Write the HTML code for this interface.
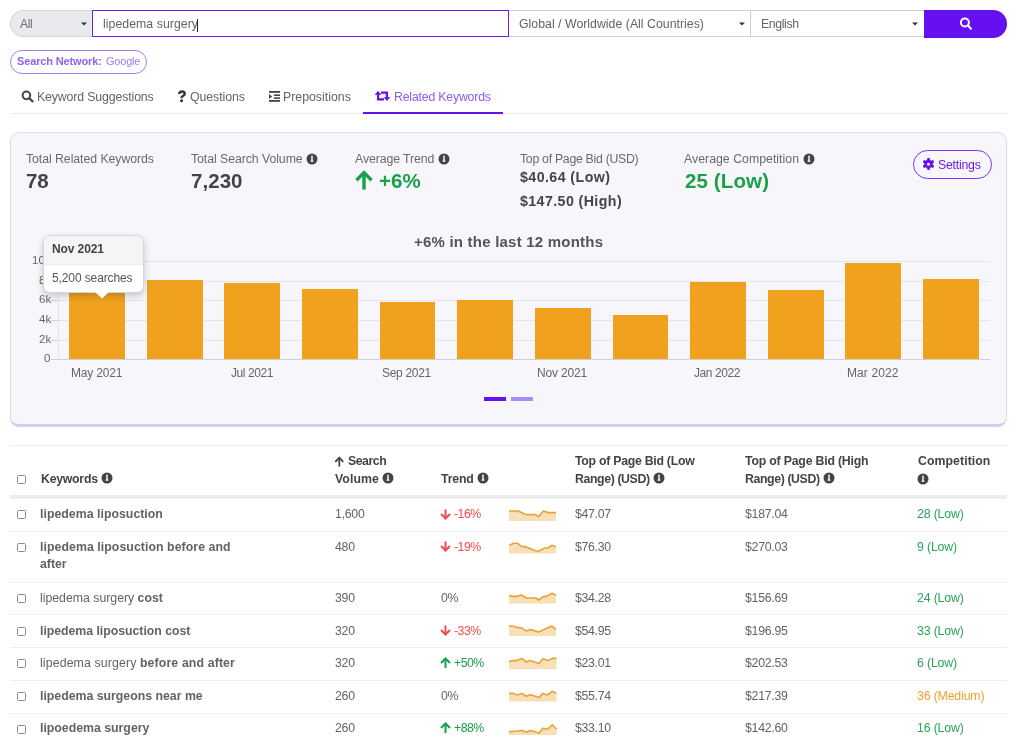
<!DOCTYPE html>
<html><head><meta charset="utf-8"><style>
html,body{margin:0;padding:0;background:#fff;width:1024px;height:743px;overflow:hidden;position:relative;font-family:"Liberation Sans", sans-serif;}
.t{position:absolute;white-space:nowrap;line-height:1;will-change:transform;}
.r{position:absolute;}
b{font-weight:700;}
</style></head><body>
<div class="r" style="left:10px;top:10px;width:82px;height:27px;background:#e9eaee;border:1px solid #d4d4d8;border-right:none;border-radius:14px 0 0 14px;box-sizing:border-box;"></div>
<div class="t" style="left:20.00px;top:17.54px;font-size:12px;font-weight:400;color:#707070;letter-spacing:-0.318px;">All</div>
<svg class="r" style="left:80.5px;top:22px;" width="6" height="4" viewBox="0 0 6 4"><path d="M0 0.5 L6 0.5 L3 3.5 Z" fill="#333"/></svg>
<div class="r" style="left:92px;top:10px;width:417px;height:27px;background:#fff;border:1.6px solid #6e1ff0;box-sizing:border-box;"></div>
<div class="t" style="left:102.80px;top:17.99px;font-size:12.3px;font-weight:400;color:#636363;letter-spacing:0.044px;">lipedema surgery</div>
<div class="r" style="left:197px;top:19px;width:1px;height:13px;background:#222;"></div>
<div class="r" style="left:509px;top:10px;width:415px;height:27px;background:#fff;border-top:1px solid #d0d0d0;border-bottom:1px solid #d0d0d0;box-sizing:border-box;"></div>
<div class="r" style="left:750px;top:10px;width:1px;height:27px;background:#d0d0d0;"></div>
<div class="t" style="left:518.50px;top:17.99px;font-size:12.3px;font-weight:400;color:#636363;letter-spacing:0.020px;">Global / Worldwide (All Countries)</div>
<svg class="r" style="left:738.5px;top:22px;" width="6" height="4" viewBox="0 0 6 4"><path d="M0 0.5 L6 0.5 L3 3.5 Z" fill="#333"/></svg>
<div class="t" style="left:761.00px;top:17.99px;font-size:12.3px;font-weight:400;color:#636363;letter-spacing:-0.390px;">English</div>
<svg class="r" style="left:911.5px;top:22px;" width="6" height="4" viewBox="0 0 6 4"><path d="M0 0.5 L6 0.5 L3 3.5 Z" fill="#333"/></svg>
<div class="r" style="left:924px;top:10px;width:83px;height:28px;background:#6610f2;border-radius:0 14px 14px 0;"></div>
<svg class="r" style="left:955px;top:13px;" width="20" height="20" viewBox="0 0 20 20"><circle cx="9.9" cy="9.45" r="4" fill="none" stroke="#fff" stroke-width="2"/><path d="M12.9 12.5 L16 15.8" stroke="#fff" stroke-width="2" stroke-linecap="round"/></svg>
<div class="r" style="left:10px;top:50px;width:137px;height:24px;border:1px solid #a47cf2;border-radius:12px;box-sizing:border-box;"></div>
<div class="t" style="left:17.40px;top:56.19px;font-size:11px;font-weight:700;color:#9262f0;letter-spacing:-0.143px;">Search Network:</div>
<div class="t" style="left:105.80px;top:56.19px;font-size:11px;font-weight:400;color:#9d7cf2;letter-spacing:-0.200px;">Google</div>
<svg class="r" style="left:20px;top:89px;" width="16" height="16" viewBox="0 0 16 16"><circle cx="6.4" cy="6.35" r="3.8" fill="none" stroke="#444" stroke-width="2"/><path d="M9.2 9.2 L12.6 12.4" stroke="#444" stroke-width="2.2" stroke-linecap="round"/></svg>
<div class="t" style="left:37.00px;top:90.59px;font-size:12.3px;font-weight:400;color:#636363;letter-spacing:-0.123px;">Keyword Suggestions</div>
<svg class="r" style="left:176px;top:89px;" width="12" height="14" viewBox="0 0 12 14"><path d="M3.2 5 C3.2 3.2 4.4 2.6 6 2.6 C7.6 2.6 8.7 3.4 8.7 4.9 C8.7 6.6 5.6 6.8 5.6 8.6 L5.6 9.2" fill="none" stroke="#383838" stroke-width="2.5"/><circle cx="5.6" cy="11.7" r="1.55" fill="#383838"/></svg>
<div class="t" style="left:190.00px;top:90.59px;font-size:12.3px;font-weight:400;color:#636363;letter-spacing:-0.048px;">Questions</div>
<svg class="r" style="left:268px;top:90px;" width="13" height="13" viewBox="0 0 13 13"><rect x="1" y="1" width="11" height="1.8" fill="#444"/><rect x="6" y="4.4" width="6" height="1.6" fill="#444"/><rect x="6" y="7.3" width="6" height="1.6" fill="#444"/><rect x="1" y="10" width="11" height="1.8" fill="#444"/><path d="M1 4 L4.2 6.5 L1 9 Z" fill="#444"/></svg>
<div class="t" style="left:283.20px;top:90.59px;font-size:12.3px;font-weight:400;color:#636363;letter-spacing:0.010px;">Prepositions</div>
<svg class="r" style="left:374px;top:90px;" width="17" height="12" viewBox="0 0 17 12"><path d="M4 1 L7.5 4.8 L5.2 4.8 L5.2 8.2 L10 8.2 L10 10.4 L3 10.4 L3 4.8 L0.6 4.8 Z" fill="#6610f2"/><path d="M13 11 L9.5 7.2 L11.8 7.2 L11.8 3.8 L7 3.8 L7 1.6 L14 1.6 L14 7.2 L16.4 7.2 Z" fill="#6610f2"/></svg>
<div class="t" style="left:393.90px;top:90.59px;font-size:12.3px;font-weight:400;color:#8b5cf6;letter-spacing:-0.188px;">Related Keywords</div>
<div class="r" style="left:10px;top:113px;width:997px;height:1px;background:#ececec;"></div>
<div class="r" style="left:363px;top:112px;width:140px;height:2px;background:#6610f2;"></div>
<div class="r" style="left:10px;top:132px;width:997px;height:295px;background:#f7f7fb;border:1px solid #dcdce0;border-bottom:3px solid #d9ccf2;border-radius:9px;box-sizing:border-box;"></div>
<div class="t" style="left:26.00px;top:152.59px;font-size:12.3px;font-weight:400;color:#6a6a6a;letter-spacing:-0.058px;">Total Related Keywords</div>
<div class="t" style="left:26.00px;top:170.65px;font-size:20.5px;font-weight:700;color:#444;letter-spacing:-0.202px;">78</div>
<div class="t" style="left:191.00px;top:152.59px;font-size:12.3px;font-weight:400;color:#6a6a6a;letter-spacing:-0.062px;">Total Search Volume</div>
<svg class="r" style="left:306.1px;top:153.3px;" width="12" height="12" viewBox="0 0 12 12"><circle cx="6" cy="6" r="5.5" fill="#444"/><rect x="5.15" y="2.6" width="1.7" height="5.6" rx="0.5" fill="#fff" fill-opacity="0.85"/><rect x="4.6" y="7.4" width="2.8" height="1.4" rx="0.4" fill="#fff"/></svg>
<div class="t" style="left:191.00px;top:170.65px;font-size:20.5px;font-weight:700;color:#444;letter-spacing:0.050px;">7,230</div>
<div class="t" style="left:355.00px;top:152.59px;font-size:12.3px;font-weight:400;color:#6a6a6a;letter-spacing:-0.097px;">Average Trend</div>
<svg class="r" style="left:438px;top:153.3px;" width="12" height="12" viewBox="0 0 12 12"><circle cx="6" cy="6" r="5.5" fill="#444"/><rect x="5.15" y="2.6" width="1.7" height="5.6" rx="0.5" fill="#fff" fill-opacity="0.85"/><rect x="4.6" y="7.4" width="2.8" height="1.4" rx="0.4" fill="#fff"/></svg>
<svg class="r" style="left:354px;top:170px;" width="20" height="20" viewBox="0 0 20 20"><path d="M10 3 L10 19.6" stroke="#1a9f4b" stroke-width="3.4"/><path d="M2.4 10.2 L10 2.6 L17.6 10.2" fill="none" stroke="#1a9f4b" stroke-width="3.4"/></svg>
<div class="t" style="left:379.00px;top:170.65px;font-size:20.5px;font-weight:700;color:#1a9f4b;letter-spacing:0.050px;">+6%</div>
<div class="t" style="left:520.20px;top:152.59px;font-size:12.3px;font-weight:400;color:#6a6a6a;letter-spacing:-0.286px;">Top of Page Bid (USD)</div>
<div class="t" style="left:520.00px;top:170.48px;font-size:14.2px;font-weight:700;color:#444;letter-spacing:0.434px;">$40.64 (Low)</div>
<div class="t" style="left:520.00px;top:193.98px;font-size:14.2px;font-weight:700;color:#444;letter-spacing:0.417px;">$147.50 (High)</div>
<div class="t" style="left:684.40px;top:152.59px;font-size:12.3px;font-weight:400;color:#6a6a6a;letter-spacing:0.020px;">Average Competition</div>
<svg class="r" style="left:802.5px;top:153.3px;" width="12" height="12" viewBox="0 0 12 12"><circle cx="6" cy="6" r="5.5" fill="#444"/><rect x="5.15" y="2.6" width="1.7" height="5.6" rx="0.5" fill="#fff" fill-opacity="0.85"/><rect x="4.6" y="7.4" width="2.8" height="1.4" rx="0.4" fill="#fff"/></svg>
<div class="t" style="left:684.70px;top:170.65px;font-size:20.5px;font-weight:700;color:#1a9f4b;letter-spacing:0.123px;">25 (Low)</div>
<div class="r" style="left:913px;top:150px;width:79px;height:29px;border:1.3px solid #7634f2;border-radius:15px;box-sizing:border-box;background:#f7f7fb;"></div>
<svg class="r" style="left:922px;top:157px;" width="13" height="14" viewBox="0 0 13 14"><g transform="translate(6.5,7)" fill="#6610f2"><rect x="-1.4" y="-5.9" width="2.8" height="11.8" transform="rotate(0)" rx="0.8"/><rect x="-1.4" y="-5.9" width="2.8" height="11.8" transform="rotate(60)" rx="0.8"/><rect x="-1.4" y="-5.9" width="2.8" height="11.8" transform="rotate(120)" rx="0.8"/><circle r="4.3"/></g><circle cx="6.5" cy="7.2" r="1.5" fill="#f7f7fb"/></svg>
<div class="t" style="left:938.10px;top:159.19px;font-size:12.3px;font-weight:400;color:#6a1cf0;letter-spacing:-0.235px;">Settings</div>
<div class="t" style="left:414.10px;top:234.00px;font-size:15px;font-weight:700;color:#555;letter-spacing:0.217px;">+6% in the last 12 months</div>
<div class="r" style="left:58px;top:261px;width:932px;height:1px;background:#e4e4ea;"></div>
<div class="r" style="left:58px;top:281px;width:932px;height:1px;background:#e4e4ea;"></div>
<div class="r" style="left:58px;top:300px;width:932px;height:1px;background:#e4e4ea;"></div>
<div class="r" style="left:58px;top:320px;width:932px;height:1px;background:#e4e4ea;"></div>
<div class="r" style="left:58px;top:340px;width:932px;height:1px;background:#e4e4ea;"></div>
<div class="r" style="left:51px;top:359px;width:939px;height:1px;background:#cfcfd6;"></div>
<div class="r" style="left:58px;top:261px;width:1px;height:98px;background:#e4e4ea;"></div>
<div class="r" style="left:51px;top:261px;width:7px;height:1px;background:#cfcfd6;"></div>
<div class="r" style="left:51px;top:281px;width:7px;height:1px;background:#cfcfd6;"></div>
<div class="r" style="left:51px;top:300px;width:7px;height:1px;background:#cfcfd6;"></div>
<div class="r" style="left:51px;top:320px;width:7px;height:1px;background:#cfcfd6;"></div>
<div class="r" style="left:51px;top:340px;width:7px;height:1px;background:#cfcfd6;"></div>
<div class="t" style="right:973.2px;top:254.57px;font-size:11.5px;color:#666;text-align:right;">10k</div>
<div class="t" style="right:973.2px;top:274.57px;font-size:11.5px;color:#666;text-align:right;">8k</div>
<div class="t" style="right:973.2px;top:293.57px;font-size:11.5px;color:#666;text-align:right;">6k</div>
<div class="t" style="right:973.2px;top:313.57px;font-size:11.5px;color:#666;text-align:right;">4k</div>
<div class="t" style="right:973.2px;top:333.57px;font-size:11.5px;color:#666;text-align:right;">2k</div>
<div class="t" style="right:973.2px;top:352.97px;font-size:11.5px;color:#666;text-align:right;">0</div>
<div class="r" style="left:69.20px;top:286px;width:55.8px;height:73.40px;background:#f0a21f;"></div>
<div class="r" style="left:146.82px;top:280.3px;width:55.8px;height:79.10px;background:#f0a21f;"></div>
<div class="r" style="left:224.44px;top:282.8px;width:55.8px;height:76.60px;background:#f0a21f;"></div>
<div class="r" style="left:302.06px;top:289px;width:55.8px;height:70.40px;background:#f0a21f;"></div>
<div class="r" style="left:379.68px;top:301.9px;width:55.8px;height:57.50px;background:#f0a21f;"></div>
<div class="r" style="left:457.30px;top:300px;width:55.8px;height:59.40px;background:#f0a21f;"></div>
<div class="r" style="left:534.92px;top:308.4px;width:55.8px;height:51.00px;background:#f0a21f;"></div>
<div class="r" style="left:612.54px;top:315px;width:55.8px;height:44.40px;background:#f0a21f;"></div>
<div class="r" style="left:690.16px;top:281.6px;width:55.8px;height:77.80px;background:#f0a21f;"></div>
<div class="r" style="left:767.78px;top:289.7px;width:55.8px;height:69.70px;background:#f0a21f;"></div>
<div class="r" style="left:845.40px;top:263px;width:55.8px;height:96.40px;background:#f0a21f;"></div>
<div class="r" style="left:923.02px;top:279.3px;width:55.8px;height:80.10px;background:#f0a21f;"></div>
<div class="t" style="left:71.10px;top:366.74px;font-size:12px;font-weight:400;color:#666;letter-spacing:-0.186px;">May 2021</div>
<div class="t" style="left:230.60px;top:366.74px;font-size:12px;font-weight:400;color:#666;letter-spacing:-0.438px;">Jul 2021</div>
<div class="t" style="left:382.40px;top:366.74px;font-size:12px;font-weight:400;color:#666;letter-spacing:-0.312px;">Sep 2021</div>
<div class="t" style="left:537.20px;top:366.74px;font-size:12px;font-weight:400;color:#666;letter-spacing:-0.153px;">Nov 2021</div>
<div class="t" style="left:694.20px;top:366.74px;font-size:12px;font-weight:400;color:#666;letter-spacing:-0.411px;">Jan 2022</div>
<div class="t" style="left:847.40px;top:366.74px;font-size:12px;font-weight:400;color:#666;letter-spacing:0.101px;">Mar 2022</div>
<div class="r" style="left:484px;top:397px;width:22px;height:4px;background:#6610f2;"></div>
<div class="r" style="left:511px;top:397px;width:22px;height:4px;background:#a78bfa;"></div>
<div class="r" style="left:42.7px;top:235.3px;width:101px;height:58px;background:#fff;border:1px solid #d6d6d6;border-radius:7px;box-sizing:border-box;box-shadow:0 3px 7px rgba(0,0,0,0.2);overflow:hidden;"><div style="height:28px;background:#f5f5f5;border-bottom:1px solid #ececec;"></div></div>
<svg class="r" style="left:95px;top:292px;" width="14" height="8" viewBox="0 0 14 8"><path d="M0 0 L7 6.5 L14 0 Z" fill="#fff"/></svg>
<div class="t" style="left:52.35px;top:242.54px;font-size:12px;font-weight:700;color:#444;letter-spacing:-0.100px;">Nov 2021</div>
<div class="t" style="left:52.35px;top:272.14px;font-size:12px;font-weight:400;color:#555;letter-spacing:-0.112px;">5,200 searches</div>
<div class="r" style="left:10px;top:445px;width:997px;height:1px;background:#eeeeee;"></div>
<div class="r" style="left:10px;top:495px;width:997px;height:4px;background:#ededed;"></div>
<div class="r" style="left:17px;top:475px;width:9px;height:9px;border:1px solid #8a8a8a;border-radius:1.5px;box-sizing:border-box;background:#fff;"></div>
<div class="t" style="left:40.60px;top:472.59px;font-size:12.3px;font-weight:700;color:#444;letter-spacing:-0.255px;">Keywords</div>
<svg class="r" style="left:101.2px;top:472.4px;" width="12" height="12" viewBox="0 0 12 12"><circle cx="6" cy="6" r="5.5" fill="#444"/><rect x="5.15" y="2.6" width="1.7" height="5.6" rx="0.5" fill="#fff" fill-opacity="0.85"/><rect x="4.6" y="7.4" width="2.8" height="1.4" rx="0.4" fill="#fff"/></svg>
<svg class="r" style="left:334px;top:456px;" width="11" height="11" viewBox="0 0 11 11"><path d="M5.3 2 L5.3 10.5" stroke="#444" stroke-width="1.8"/><path d="M1.3 5.8 L5.3 1.6 L9.3 5.8" fill="none" stroke="#444" stroke-width="1.8"/></svg>
<div class="t" style="left:348.10px;top:454.89px;font-size:12.3px;font-weight:700;color:#444;letter-spacing:-0.465px;">Search</div>
<div class="t" style="left:335.00px;top:472.59px;font-size:12.3px;font-weight:700;color:#444;letter-spacing:0.077px;">Volume</div>
<svg class="r" style="left:382px;top:472.4px;" width="12" height="12" viewBox="0 0 12 12"><circle cx="6" cy="6" r="5.5" fill="#444"/><rect x="5.15" y="2.6" width="1.7" height="5.6" rx="0.5" fill="#fff" fill-opacity="0.85"/><rect x="4.6" y="7.4" width="2.8" height="1.4" rx="0.4" fill="#fff"/></svg>
<div class="t" style="left:441.00px;top:472.59px;font-size:12.3px;font-weight:700;color:#444;letter-spacing:-0.172px;">Trend</div>
<svg class="r" style="left:477px;top:472.4px;" width="12" height="12" viewBox="0 0 12 12"><circle cx="6" cy="6" r="5.5" fill="#444"/><rect x="5.15" y="2.6" width="1.7" height="5.6" rx="0.5" fill="#fff" fill-opacity="0.85"/><rect x="4.6" y="7.4" width="2.8" height="1.4" rx="0.4" fill="#fff"/></svg>
<div class="t" style="left:574.70px;top:454.89px;font-size:12.3px;font-weight:700;color:#444;letter-spacing:-0.264px;">Top of Page Bid (Low</div>
<div class="t" style="left:574.70px;top:472.59px;font-size:12.3px;font-weight:700;color:#444;letter-spacing:-0.388px;">Range) (USD)</div>
<svg class="r" style="left:653px;top:472.4px;" width="12" height="12" viewBox="0 0 12 12"><circle cx="6" cy="6" r="5.5" fill="#444"/><rect x="5.15" y="2.6" width="1.7" height="5.6" rx="0.5" fill="#fff" fill-opacity="0.85"/><rect x="4.6" y="7.4" width="2.8" height="1.4" rx="0.4" fill="#fff"/></svg>
<div class="t" style="left:744.70px;top:454.89px;font-size:12.3px;font-weight:700;color:#444;letter-spacing:-0.197px;">Top of Page Bid (High</div>
<div class="t" style="left:744.70px;top:472.59px;font-size:12.3px;font-weight:700;color:#444;letter-spacing:-0.388px;">Range) (USD)</div>
<svg class="r" style="left:823px;top:472.4px;" width="12" height="12" viewBox="0 0 12 12"><circle cx="6" cy="6" r="5.5" fill="#444"/><rect x="5.15" y="2.6" width="1.7" height="5.6" rx="0.5" fill="#fff" fill-opacity="0.85"/><rect x="4.6" y="7.4" width="2.8" height="1.4" rx="0.4" fill="#fff"/></svg>
<div class="t" style="left:917.50px;top:454.89px;font-size:12.3px;font-weight:700;color:#444;letter-spacing:0.066px;">Competition</div>
<svg class="r" style="left:916.7px;top:472.7px;" width="12" height="12" viewBox="0 0 12 12"><circle cx="6" cy="6" r="5.5" fill="#444"/><rect x="5.15" y="2.6" width="1.7" height="5.6" rx="0.5" fill="#fff" fill-opacity="0.85"/><rect x="4.6" y="7.4" width="2.8" height="1.4" rx="0.4" fill="#fff"/></svg>
<div class="r" style="left:17px;top:510px;width:9px;height:9px;border:1px solid #8a8a8a;border-radius:1.5px;box-sizing:border-box;background:#fff;"></div>
<div class="t" style="left:40.40px;top:508.39px;font-size:12.3px;font-weight:400;color:#636363;letter-spacing:0.030px;"><b>lipedema liposuction</b></div>
<div class="t" style="left:334.50px;top:508.39px;font-size:12.3px;font-weight:400;color:#636363;letter-spacing:-0.250px;">1,600</div>
<svg class="r" style="left:439px;top:507.79999999999995px;" width="13" height="12" viewBox="0 0 13 12"><path d="M6.5 1.5 L6.5 10" stroke="#f44a4a" stroke-width="2"/><path d="M2 6 L6.5 10.5 L11 6" fill="none" stroke="#f44a4a" stroke-width="2"/></svg>
<div class="t" style="left:453.80px;top:508.39px;font-size:12.3px;font-weight:400;color:#f44a4a;letter-spacing:-0.500px;">-16%</div>
<svg class="r" style="left:509px;top:510.00px;" width="48" height="13" viewBox="0 0 48 13"><path d="M0.0 1.0 L9.4 1.0 L17.0 4.6 L26.5 4.6 L29.7 6.5 L34.4 1.0 L39.0 2.6 L47.0 2.6 L47.0 11.0 L0 11.0 Z" fill="#f7dfb8"/><path d="M0.0 1.0 L9.4 1.0 L17.0 4.6 L26.5 4.6 L29.7 6.5 L34.4 1.0 L39.0 2.6 L47.0 2.6" fill="none" stroke="#eba236" stroke-width="1.6" stroke-linejoin="round"/></svg>
<div class="t" style="left:574.70px;top:508.39px;font-size:12.3px;font-weight:400;color:#636363;letter-spacing:-0.300px;">$47.07</div>
<div class="t" style="left:744.70px;top:508.39px;font-size:12.3px;font-weight:400;color:#636363;letter-spacing:-0.250px;">$187.04</div>
<div class="t" style="left:917.00px;top:508.39px;font-size:12.3px;font-weight:400;color:#27a558;letter-spacing:-0.150px;">28 (Low)</div>
<div class="r" style="left:10px;top:531px;width:997px;height:1px;background:#efefef;"></div>
<div class="r" style="left:17px;top:543px;width:9px;height:9px;border:1px solid #8a8a8a;border-radius:1.5px;box-sizing:border-box;background:#fff;"></div>
<div class="t" style="left:40.40px;top:540.59px;font-size:12.3px;font-weight:400;color:#636363;letter-spacing:0.066px;"><b>lipedema liposuction before and</b></div>
<div class="t" style="left:40.40px;top:557.89px;font-size:12.3px;font-weight:400;color:#636363;"><b>after</b></div>
<div class="t" style="left:334.50px;top:540.59px;font-size:12.3px;font-weight:400;color:#636363;letter-spacing:-0.250px;">480</div>
<svg class="r" style="left:439px;top:540px;" width="13" height="12" viewBox="0 0 13 12"><path d="M6.5 1.5 L6.5 10" stroke="#f44a4a" stroke-width="2"/><path d="M2 6 L6.5 10.5 L11 6" fill="none" stroke="#f44a4a" stroke-width="2"/></svg>
<div class="t" style="left:453.80px;top:540.59px;font-size:12.3px;font-weight:400;color:#f44a4a;letter-spacing:-0.500px;">-19%</div>
<svg class="r" style="left:509px;top:542.00px;" width="48" height="13" viewBox="0 0 48 13"><path d="M0.0 3.3 L4.7 1.3 L8.6 1.3 L12.5 4.4 L17.2 4.9 L26.6 8.8 L29.7 9.1 L35.9 6.0 L39.0 5.7 L43.0 3.3 L47.0 4.9 L47.0 11.6 L0 11.6 Z" fill="#f7dfb8"/><path d="M0.0 3.3 L4.7 1.3 L8.6 1.3 L12.5 4.4 L17.2 4.9 L26.6 8.8 L29.7 9.1 L35.9 6.0 L39.0 5.7 L43.0 3.3 L47.0 4.9" fill="none" stroke="#eba236" stroke-width="1.6" stroke-linejoin="round"/></svg>
<div class="t" style="left:574.70px;top:540.59px;font-size:12.3px;font-weight:400;color:#636363;letter-spacing:-0.300px;">$76.30</div>
<div class="t" style="left:744.70px;top:540.59px;font-size:12.3px;font-weight:400;color:#636363;letter-spacing:-0.250px;">$270.03</div>
<div class="t" style="left:917.00px;top:540.59px;font-size:12.3px;font-weight:400;color:#27a558;letter-spacing:-0.150px;">9 (Low)</div>
<div class="r" style="left:10px;top:582px;width:997px;height:1px;background:#efefef;"></div>
<div class="r" style="left:17px;top:594px;width:9px;height:9px;border:1px solid #8a8a8a;border-radius:1.5px;box-sizing:border-box;background:#fff;"></div>
<div class="t" style="left:40.40px;top:591.79px;font-size:12.3px;font-weight:400;color:#636363;letter-spacing:-0.008px;">lipedema surgery <b>cost</b></div>
<div class="t" style="left:334.50px;top:591.79px;font-size:12.3px;font-weight:400;color:#636363;letter-spacing:-0.250px;">390</div>
<div class="t" style="left:440.70px;top:591.79px;font-size:12.3px;font-weight:400;color:#636363;letter-spacing:-0.250px;">0%</div>
<svg class="r" style="left:509px;top:591.50px;" width="48" height="13" viewBox="0 0 48 13"><path d="M0.0 3.3 L4.7 4.6 L8.6 4.1 L12.5 3.0 L17.2 6.0 L26.6 6.0 L29.7 8.0 L34.4 4.6 L38.3 4.1 L43.0 1.3 L47.0 3.3 L47.0 11.6 L0 11.6 Z" fill="#f7dfb8"/><path d="M0.0 3.3 L4.7 4.6 L8.6 4.1 L12.5 3.0 L17.2 6.0 L26.6 6.0 L29.7 8.0 L34.4 4.6 L38.3 4.1 L43.0 1.3 L47.0 3.3" fill="none" stroke="#eba236" stroke-width="1.6" stroke-linejoin="round"/></svg>
<div class="t" style="left:574.70px;top:591.79px;font-size:12.3px;font-weight:400;color:#636363;letter-spacing:-0.300px;">$34.28</div>
<div class="t" style="left:744.70px;top:591.79px;font-size:12.3px;font-weight:400;color:#636363;letter-spacing:-0.250px;">$156.69</div>
<div class="t" style="left:917.00px;top:591.79px;font-size:12.3px;font-weight:400;color:#27a558;letter-spacing:-0.150px;">24 (Low)</div>
<div class="r" style="left:10px;top:614px;width:997px;height:1px;background:#efefef;"></div>
<div class="r" style="left:17px;top:627px;width:9px;height:9px;border:1px solid #8a8a8a;border-radius:1.5px;box-sizing:border-box;background:#fff;"></div>
<div class="t" style="left:40.40px;top:624.59px;font-size:12.3px;font-weight:400;color:#636363;letter-spacing:-0.027px;"><b>lipedema liposuction cost</b></div>
<div class="t" style="left:334.50px;top:624.59px;font-size:12.3px;font-weight:400;color:#636363;letter-spacing:-0.250px;">320</div>
<svg class="r" style="left:439px;top:624px;" width="13" height="12" viewBox="0 0 13 12"><path d="M6.5 1.5 L6.5 10" stroke="#f44a4a" stroke-width="2"/><path d="M2 6 L6.5 10.5 L11 6" fill="none" stroke="#f44a4a" stroke-width="2"/></svg>
<div class="t" style="left:453.80px;top:624.59px;font-size:12.3px;font-weight:400;color:#f44a4a;letter-spacing:-0.500px;">-33%</div>
<svg class="r" style="left:509px;top:624.40px;" width="48" height="13" viewBox="0 0 48 13"><path d="M0.0 2.1 L4.7 2.2 L8.6 3.8 L12.5 3.8 L17.2 6.9 L21.9 5.4 L29.7 8.0 L34.4 5.7 L43.0 2.1 L47.0 5.4 L47.0 11.9 L0 11.9 Z" fill="#f7dfb8"/><path d="M0.0 2.1 L4.7 2.2 L8.6 3.8 L12.5 3.8 L17.2 6.9 L21.9 5.4 L29.7 8.0 L34.4 5.7 L43.0 2.1 L47.0 5.4" fill="none" stroke="#eba236" stroke-width="1.6" stroke-linejoin="round"/></svg>
<div class="t" style="left:574.70px;top:624.59px;font-size:12.3px;font-weight:400;color:#636363;letter-spacing:-0.300px;">$54.95</div>
<div class="t" style="left:744.70px;top:624.59px;font-size:12.3px;font-weight:400;color:#636363;letter-spacing:-0.250px;">$196.95</div>
<div class="t" style="left:917.00px;top:624.59px;font-size:12.3px;font-weight:400;color:#27a558;letter-spacing:-0.150px;">33 (Low)</div>
<div class="r" style="left:10px;top:647px;width:997px;height:1px;background:#efefef;"></div>
<div class="r" style="left:17px;top:659px;width:9px;height:9px;border:1px solid #8a8a8a;border-radius:1.5px;box-sizing:border-box;background:#fff;"></div>
<div class="t" style="left:40.40px;top:657.19px;font-size:12.3px;font-weight:400;color:#636363;letter-spacing:0.131px;">lipedema surgery <b>before and after</b></div>
<div class="t" style="left:334.50px;top:657.19px;font-size:12.3px;font-weight:400;color:#636363;letter-spacing:-0.250px;">320</div>
<svg class="r" style="left:439px;top:656.6px;" width="13" height="12" viewBox="0 0 13 12"><path d="M6.5 2 L6.5 11" stroke="#1a9f4b" stroke-width="2"/><path d="M2 6 L6.5 1.5 L11 6" fill="none" stroke="#1a9f4b" stroke-width="2"/></svg>
<div class="t" style="left:453.80px;top:657.19px;font-size:12.3px;font-weight:400;color:#1a9f4b;letter-spacing:-0.500px;">+50%</div>
<svg class="r" style="left:509px;top:657.10px;" width="48" height="13" viewBox="0 0 48 13"><path d="M0.0 4.7 L3.6 3.6 L7.5 3.6 L12.8 1.4 L17.4 5.0 L21.4 3.6 L30.0 6.5 L33.9 1.7 L39.2 3.6 L43.2 1.4 L47.5 1.4 L47.5 12.0 L0 12.0 Z" fill="#f7dfb8"/><path d="M0.0 4.7 L3.6 3.6 L7.5 3.6 L12.8 1.4 L17.4 5.0 L21.4 3.6 L30.0 6.5 L33.9 1.7 L39.2 3.6 L43.2 1.4 L47.5 1.4" fill="none" stroke="#eba236" stroke-width="1.6" stroke-linejoin="round"/></svg>
<div class="t" style="left:574.70px;top:657.19px;font-size:12.3px;font-weight:400;color:#636363;letter-spacing:-0.300px;">$23.01</div>
<div class="t" style="left:744.70px;top:657.19px;font-size:12.3px;font-weight:400;color:#636363;letter-spacing:-0.250px;">$202.53</div>
<div class="t" style="left:917.00px;top:657.19px;font-size:12.3px;font-weight:400;color:#27a558;letter-spacing:-0.150px;">6 (Low)</div>
<div class="r" style="left:10px;top:680px;width:997px;height:1px;background:#efefef;"></div>
<div class="r" style="left:17px;top:692px;width:9px;height:9px;border:1px solid #8a8a8a;border-radius:1.5px;box-sizing:border-box;background:#fff;"></div>
<div class="t" style="left:40.40px;top:690.39px;font-size:12.3px;font-weight:400;color:#636363;"><b>lipedema surgeons near me</b></div>
<div class="t" style="left:334.50px;top:690.39px;font-size:12.3px;font-weight:400;color:#636363;letter-spacing:-0.250px;">260</div>
<div class="t" style="left:440.70px;top:690.39px;font-size:12.3px;font-weight:400;color:#636363;letter-spacing:-0.250px;">0%</div>
<svg class="r" style="left:509px;top:690.20px;" width="48" height="13" viewBox="0 0 48 13"><path d="M0.0 3.4 L4.2 3.4 L8.2 5.0 L12.8 3.4 L17.4 6.3 L21.4 4.7 L30.0 7.6 L33.9 3.4 L38.5 5.0 L43.2 1.3 L47.5 3.4 L47.5 11.5 L0 11.5 Z" fill="#f7dfb8"/><path d="M0.0 3.4 L4.2 3.4 L8.2 5.0 L12.8 3.4 L17.4 6.3 L21.4 4.7 L30.0 7.6 L33.9 3.4 L38.5 5.0 L43.2 1.3 L47.5 3.4" fill="none" stroke="#eba236" stroke-width="1.6" stroke-linejoin="round"/></svg>
<div class="t" style="left:574.70px;top:690.39px;font-size:12.3px;font-weight:400;color:#636363;letter-spacing:-0.300px;">$55.74</div>
<div class="t" style="left:744.70px;top:690.39px;font-size:12.3px;font-weight:400;color:#636363;letter-spacing:-0.250px;">$217.39</div>
<div class="t" style="left:917.00px;top:690.39px;font-size:12.3px;font-weight:400;color:#f0a030;letter-spacing:-0.150px;">36 (Medium)</div>
<div class="r" style="left:10px;top:713px;width:997px;height:1px;background:#efefef;"></div>
<div class="r" style="left:17px;top:725px;width:9px;height:9px;border:1px solid #8a8a8a;border-radius:1.5px;box-sizing:border-box;background:#fff;"></div>
<div class="t" style="left:40.40px;top:722.49px;font-size:12.3px;font-weight:400;color:#636363;"><b>lipoedema surgery</b></div>
<div class="t" style="left:334.50px;top:722.49px;font-size:12.3px;font-weight:400;color:#636363;letter-spacing:-0.250px;">260</div>
<svg class="r" style="left:439px;top:721.9px;" width="13" height="12" viewBox="0 0 13 12"><path d="M6.5 2 L6.5 11" stroke="#1a9f4b" stroke-width="2"/><path d="M2 6 L6.5 1.5 L11 6" fill="none" stroke="#1a9f4b" stroke-width="2"/></svg>
<div class="t" style="left:453.80px;top:722.49px;font-size:12.3px;font-weight:400;color:#1a9f4b;letter-spacing:-0.500px;">+88%</div>
<svg class="r" style="left:509px;top:723.10px;" width="48" height="13" viewBox="0 0 48 13"><path d="M0.0 8.9 L4.2 8.3 L8.2 8.3 L12.8 7.3 L17.4 9.2 L21.4 7.6 L30.0 10.0 L33.9 5.2 L38.5 6.3 L43.2 1.7 L47.5 6.3 L47.5 11.9 L0 11.9 Z" fill="#f7dfb8"/><path d="M0.0 8.9 L4.2 8.3 L8.2 8.3 L12.8 7.3 L17.4 9.2 L21.4 7.6 L30.0 10.0 L33.9 5.2 L38.5 6.3 L43.2 1.7 L47.5 6.3" fill="none" stroke="#eba236" stroke-width="1.6" stroke-linejoin="round"/></svg>
<div class="t" style="left:574.70px;top:722.49px;font-size:12.3px;font-weight:400;color:#636363;letter-spacing:-0.300px;">$33.10</div>
<div class="t" style="left:744.70px;top:722.49px;font-size:12.3px;font-weight:400;color:#636363;letter-spacing:-0.250px;">$142.60</div>
<div class="t" style="left:917.00px;top:722.49px;font-size:12.3px;font-weight:400;color:#27a558;letter-spacing:-0.150px;">16 (Low)</div>
</body></html>
